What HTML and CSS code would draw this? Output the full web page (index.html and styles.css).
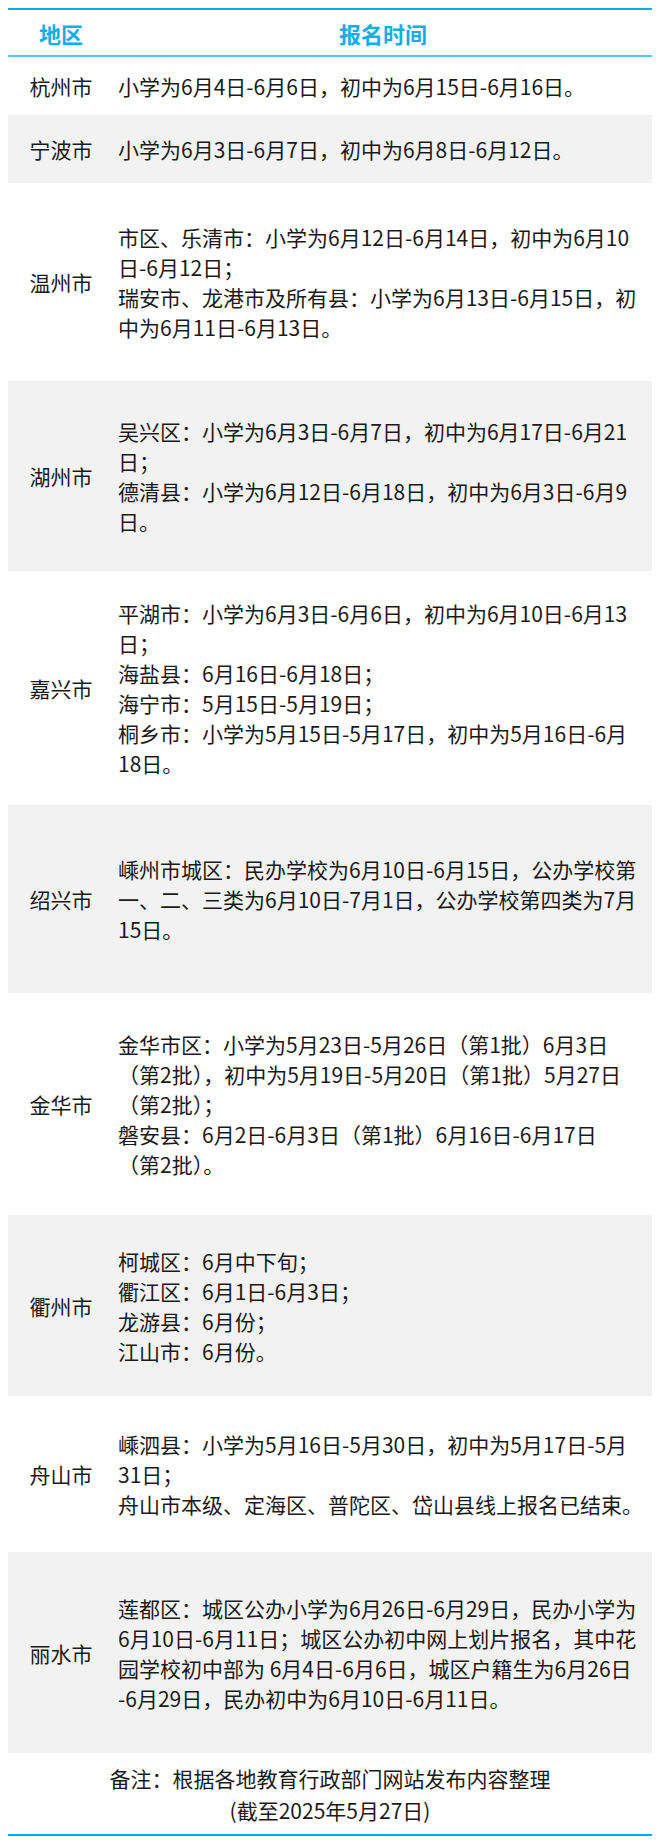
FILE: index.html
```html
<!DOCTYPE html>
<html lang="zh-CN">
<head>
<meta charset="utf-8">
<title>浙江各地报名时间</title>
<link rel="stylesheet" href="styles.css">
</head>
<body>
<div class="sheet">
  <div class="head">
    <div class="hcell">地区</div>
    <div class="hcell">报名时间</div>
  </div>
  <div class="rows">
    <div class="row r1">
      <div class="city">杭州市</div>
      <div class="info">小学为6月4日-6月6日，初中为6月15日-6月16日。</div>
    </div>
    <div class="row r2">
      <div class="city">宁波市</div>
      <div class="info">小学为6月3日-6月7日，初中为6月8日-6月12日。</div>
    </div>
    <div class="row r3">
      <div class="city">温州市</div>
      <div class="info">市区、乐清市：小学为6月12日-6月14日，初中为6月10<br>日-6月12日；<br>瑞安市、龙港市及所有县：小学为6月13日-6月15日，初<br>中为6月11日-6月13日。</div>
    </div>
    <div class="row r4">
      <div class="city">湖州市</div>
      <div class="info">吴兴区：小学为6月3日-6月7日，初中为6月17日-6月21<br>日；<br>德清县：小学为6月12日-6月18日，初中为6月3日-6月9<br>日。</div>
    </div>
    <div class="row r5">
      <div class="city">嘉兴市</div>
      <div class="info">平湖市：小学为6月3日-6月6日，初中为6月10日-6月13<br>日；<br>海盐县：6月16日-6月18日；<br>海宁市：5月15日-5月19日；<br>桐乡市：小学为5月15日-5月17日，初中为5月16日-6月<br>18日。</div>
    </div>
    <div class="row r6">
      <div class="city">绍兴市</div>
      <div class="info">嵊州市城区：民办学校为6月10日-6月15日，公办学校第<br>一、二、三类为6月10日-7月1日，公办学校第四类为7月<br>15日。</div>
    </div>
    <div class="row r7">
      <div class="city">金华市</div>
      <div class="info">金华市区：小学为5月23日-5月26日（第1批）6月3日<br>（第2批），初中为5月19日-5月20日（第1批）5月27日<br>（第2批）；<br>磐安县：6月2日-6月3日（第1批）6月16日-6月17日<br>（第2批）。</div>
    </div>
    <div class="row r8">
      <div class="city">衢州市</div>
      <div class="info">柯城区：6月中下旬；<br>衢江区：6月1日-6月3日；<br>龙游县：6月份；<br>江山市：6月份。</div>
    </div>
    <div class="row r9">
      <div class="city">舟山市</div>
      <div class="info">嵊泗县：小学为5月16日-5月30日，初中为5月17日-5月<br>31日；<br>舟山市本级、定海区、普陀区、岱山县线上报名已结束。</div>
    </div>
    <div class="row r10">
      <div class="city">丽水市</div>
      <div class="info">莲都区：城区公办小学为6月26日-6月29日，民办小学为<br>6月10日-6月11日；城区公办初中网上划片报名，其中花<br>园学校初中部为 6月4日-6月6日，城区户籍生为6月26日<br>-6月29日，民办初中为6月10日-6月11日。</div>
    </div>
  </div>
  <div class="note">备注：根据各地教育行政部门网站发布内容整理<br>(截至2025年5月27日)</div>
</div>
</body>
</html>
```

FILE: styles.css
```css
html, body {
  margin: 0;
  padding: 0;
  background: #ffffff;
}

body {
  padding: 8px;
  font-family: "Noto Sans CJK SC", "Microsoft YaHei", sans-serif;
  color: #1a1a1a;
}

.sheet {
  width: 644px;
  border-top: 2px solid #00aeef;
  border-bottom: 2px solid #00aeef;
}

.head {
  display: grid;
  grid-template-columns: 106px 1fr;
  height: 45px;
  border-bottom: 2px solid #4fc6f0;
  align-items: center;
}

.hcell {
  text-align: center;
  font-size: 22px;
  font-weight: 700;
  color: #11aeea;
  line-height: 30px;
}

.row {
  display: grid;
  grid-template-columns: 106px 1fr;
  align-items: center;
  font-size: 21px;
  line-height: 30px;
}

.row:nth-child(even) {
  background: #f2f2f2;
}

.r1 { height: 58px; }
.r2 { height: 68px; }
.r3 { height: 198px; }
.r4 { height: 190px; }
.r5 { height: 234px; }
.r6 { height: 188px; }
.r7 { height: 222px; }
.r8 { height: 181px; }
.r9 { height: 156px; }
.r10 { height: 201px; }

.city {
  text-align: center;
}

.info {
  padding-left: 4px;
  white-space: nowrap;
}

.note {
  height: 81px;
  display: flex;
  align-items: center;
  justify-content: center;
  text-align: center;
  font-size: 21px;
  line-height: 32px;
}
```
